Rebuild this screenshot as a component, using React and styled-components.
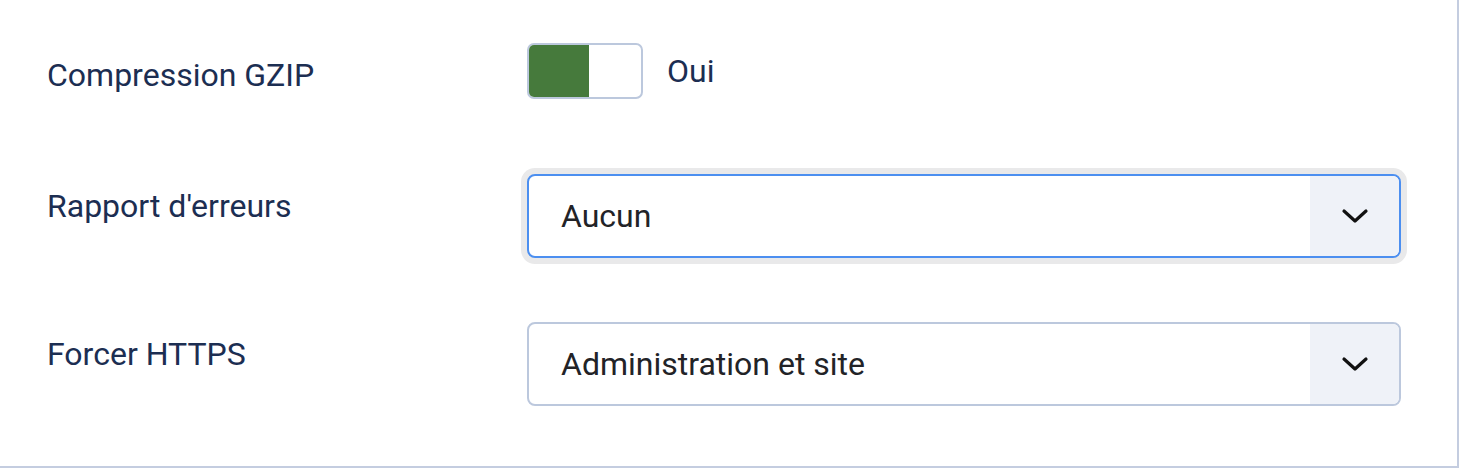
import React from 'react'
import styled, { createGlobalStyle } from 'styled-components'

const GlobalStyle = createGlobalStyle`
      html, body {
            margin: 0;
            padding: 0;
            background: #ffffff;
      }
      body {
            font-family: Roboto, 'Noto Sans', sans-serif;
      }
`

const Card = styled.div`
      box-sizing: border-box;
      width: 1459px;
      height: 468px;
      border-right: 2px solid #c4cde0;
      border-bottom: 2px solid #c4cde0;
      padding: 43px 0 0 47px;
`

const Row = styled.div`
      display: flex;
      align-items: flex-start;
      margin-bottom: ${(p) => p.gap}px;
`

const Label = styled.div`
      width: 480px;
      flex-shrink: 0;
      padding-top: ${(p) => p.offset}px;
      font-size: 32px;
      line-height: 38px;
      color: #1c2e52;
`

const SwitchWrap = styled.div`
      display: flex;
      align-items: center;
      gap: 24px;
`

const Switch = styled.div`
      box-sizing: border-box;
      width: 116px;
      height: 56px;
      border: 2px solid #bcc8dd;
      border-radius: 7px;
      background: #ffffff;
      display: flex;
      overflow: hidden;
`

const SwitchOn = styled.div`
      width: 60px;
      height: 100%;
      background: ${(p) => (p.on ? '#467a3c' : 'transparent')};
`

const SwitchText = styled.span`
      font-size: 32px;
      color: #1c2e52;
`

const SelectBox = styled.div`
      box-sizing: border-box;
      width: 874px;
      height: 84px;
      display: flex;
      align-items: stretch;
      border-radius: 8px;
      border: ${(p) => (p.focused ? '2px solid #4c8ff0' : '2px solid #bcc8dd')};
      box-shadow: ${(p) => (p.focused ? '0 0 0 6px #e9e9ea' : 'none')};
      background: #ffffff;
      overflow: hidden;
`

const SelectValue = styled.div`
      flex: 1;
      display: flex;
      align-items: center;
      padding-left: 32px;
      font-size: 32px;
      color: #222327;
`

const SelectArrow = styled.div`
      width: 89px;
      background: #eff2f8;
      display: flex;
      align-items: center;
      justify-content: center;
`

const Chevron = () => (
      <svg width='28' height='16' viewBox='0 0 28 16' fill='none'>
            <path d='M3 3 L14 13 L25 3' stroke='#111' strokeWidth='3.2' strokeLinecap='round' strokeLinejoin='round' />
      </svg>
)

const Select = ({ value, focused }) => (
      <SelectBox focused={focused}>
            <SelectValue>{value}</SelectValue>
            <SelectArrow>
                  <Chevron />
            </SelectArrow>
      </SelectBox>
)

const App = () => {
      return (
            <>
                  <GlobalStyle />
                  <Card>
                        <Row gap={75}>
                              <Label offset={13}>Compression GZIP</Label>
                              <SwitchWrap>
                                    <Switch>
                                          <SwitchOn on />
                                    </Switch>
                                    <SwitchText>Oui</SwitchText>
                              </SwitchWrap>
                        </Row>
                        <Row gap={64}>
                              <Label offset={13}>Rapport d'erreurs</Label>
                              <Select value='Aucun' focused />
                        </Row>
                        <Row gap={0}>
                              <Label offset={13}>Forcer HTTPS</Label>
                              <Select value='Administration et site' />
                        </Row>
                  </Card>
            </>
      )
}

export default App
